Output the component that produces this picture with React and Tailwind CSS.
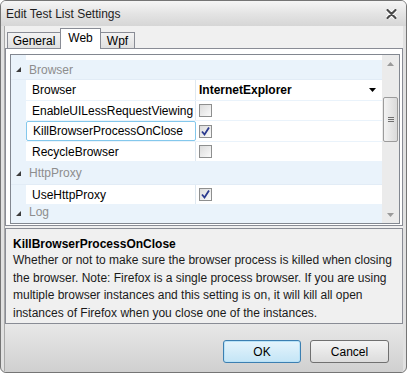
import { useState } from "react";

const font = { fontFamily: '"Liberation Sans", Arial, sans-serif' };

const Check = ({ checked }) => (
  <div className="w-[13px] h-[13px] border border-[#8e8f8f] bg-gradient-to-br from-[#dcdcdc] to-[#fafafa] flex items-center justify-center">
    {checked && (
      <svg width="11" height="11" viewBox="0 0 11 11">
        <path d="M2 5.5 L4.5 8.5 L9 1.5" fill="none" stroke="#2b3a8f" strokeWidth="1.8" />
      </svg>
    )}
  </div>
);

const Category = ({ label, h }) => (
  <div className={`flex items-center shrink-0 ${h} bg-[#eaf3fb] border-b border-[#e2ecf6]`}>
    <div className="w-[15px] flex justify-center">
      <svg width="7" height="7" viewBox="0 0 7 7">
        <path d="M6 1 L6 6 L1 6 Z" fill="#3c3c3c" />
      </svg>
    </div>
    <span className="text-[#8d8d8d] pl-[3px]">{label}</span>
  </div>
);

const Row = ({ name, selected, h, children }) => (
  <div className={`flex shrink-0 ${h} border-b border-[#eaf3fb]`}>
    <div className="w-[15px] bg-[#eaf3fb]" />
    <div
      className={`w-[170px] flex items-center pl-[6px] ${
        selected ? "border border-[#84c8ec] rounded-[2px] bg-white pl-[5px]" : "border-r border-[#dfe8f0]"
      }`}
    >
      {name}
    </div>
    <div className="flex-1 flex items-center pl-[3px] pr-[6px] bg-white">{children}</div>
  </div>
);

const tabs = [
  { label: "General", w: "w-[54px]" },
  { label: "Web", w: "w-[41px]" },
  { label: "Wpf", w: "w-[35px]" },
];

export default function App() {
  const [tab, setTab] = useState("Web");
  return (
    <div className="w-[409px] h-[375px] bg-white text-[12px] text-black" style={font}>
      <div className="w-[407px] h-[373px] border border-[#757575] rounded-[6px] overflow-hidden flex flex-col bg-[#e1e1e1]">
        <div className="h-[25px] shrink-0 flex items-center justify-between pl-[5px] pr-[9px] bg-gradient-to-b from-[#f6f6f6] via-[#e4e4e4] to-[#d6d6d6]">
          <span className="text-[12px] text-[#1e1e1e]">Edit Test List Settings</span>
          <svg width="11" height="10" viewBox="0 0 11 10">
            <path d="M1.5 1 L9.5 9 M9.5 1 L1.5 9" stroke="#ffffff" strokeWidth="4" strokeLinecap="round" />
            <path d="M1.5 1 L9.5 9 M9.5 1 L1.5 9" stroke="#4a4a4a" strokeWidth="2.2" strokeLinecap="round" />
          </svg>
        </div>
        <div className="flex-1 ml-[3px] mr-[3px] pt-[1px] flex flex-col bg-[#f0f0f0] border-l border-[#a9a9a9]">
          <div className="flex pl-[2px] h-[21px] items-end shrink-0">
            {tabs.map((t) => (
              <button
                key={t.label}
                onClick={() => setTab(t.label)}
                className={`${t.w} border border-[#898c95] border-b-0 -mr-[1px] leading-none ${
                  tab === t.label
                    ? "h-[21px] bg-white z-10 relative top-[1px] pb-[3px]"
                    : "h-[16px] bg-gradient-to-b from-[#f3f3f3] to-[#e0e0e0] pt-[1px]"
                }`}
              >
                {t.label}
              </button>
            ))}
          </div>
          <div className="border border-[#898c95] bg-white pt-[5px] pl-[4px] pr-[2px] pb-[1px] h-[178px] shrink-0">
            <div className="border border-[#828790] h-full flex overflow-hidden">
              <div className="flex-1 flex flex-col">
                <div className="h-[5px] flex shrink-0">
                  <div className="w-[15px] bg-[#eaf3fb]" />
                </div>
                <Category label="Browser" h="h-[20px]" />
                <Row name="Browser" h="h-[21px]">
                  <span className="font-bold flex-1">InternetExplorer</span>
                  <svg width="7" height="4" viewBox="0 0 7 4">
                    <path d="M0 0 L7 0 L3.5 4 Z" fill="#000" />
                  </svg>
                </Row>
                <Row name="EnableUILessRequestViewing" h="h-[20px]">
                  <Check />
                </Row>
                <Row name="KillBrowserProcessOnClose" selected h="h-[21px]">
                  <Check checked />
                </Row>
                <Row name="RecycleBrowser" h="h-[20px]">
                  <Check />
                </Row>
                <Category label="HttpProxy" h="h-[23px]" />
                <Row name="UseHttpProxy" h="h-[20px]">
                  <Check checked />
                </Row>
                <div className="flex-1 flex bg-[#eaf3fb]">
                  <div className="w-[15px] flex justify-center pt-[5px]">
                    <svg width="7" height="7" viewBox="0 0 7 7">
                      <path d="M6 1 L6 6 L1 6 Z" fill="#3c3c3c" />
                    </svg>
                  </div>
                  <span className="text-[#8d8d8d] pl-[3px] leading-none pt-[1px]">Log</span>
                </div>
              </div>
              <div className="w-[17px] bg-[#ebebeb] flex flex-col items-center shrink-0">
                <div className="h-[17px] flex items-center justify-center">
                  <svg width="7" height="4" viewBox="0 0 7 4">
                    <path d="M0 4 L7 4 L3.5 0 Z" fill="#9a9a9a" />
                  </svg>
                </div>
                <div className="mt-[25px] w-[15px] h-[45px] border border-[#9b9b9b] rounded-[2px] bg-gradient-to-r from-[#f3f3f3] to-[#dadada] flex flex-col items-center justify-center gap-[1px]">
                  <div className="w-[6px] h-px bg-[#6f6f6f]" />
                  <div className="w-[6px] h-px bg-[#6f6f6f]" />
                  <div className="w-[6px] h-px bg-[#6f6f6f]" />
                </div>
                <div className="flex-1" />
                <div className="h-[17px] flex items-center justify-center">
                  <svg width="7" height="4" viewBox="0 0 7 4">
                    <path d="M0 0 L7 0 L3.5 4 Z" fill="#9a9a9a" />
                  </svg>
                </div>
              </div>
            </div>
          </div>
          <div className="mt-[2px] border border-[#898c95] bg-[#f0f0f0] px-[7px] pt-[9px] h-[96px] shrink-0">
            <div className="font-bold leading-none">KillBrowserProcessOnClose</div>
            <p className="leading-[17.5px] mt-[2px] text-[#1a1a1a]">
              Whether or not to make sure the browser process is killed when closing the browser. Note: Firefox is a
              single process browser. If you are using multiple browser instances and this setting is on, it will kill
              all open instances of Firefox when you close one of the instances.
            </p>
          </div>
          <div className="flex-1 flex justify-end items-start gap-[9px] pt-[16px] pr-[14px] bg-gradient-to-b from-[#e8e8e8] to-[#d0d0d0]">
            <button className="w-[78px] h-[23px] rounded-[3px] border border-[#3c7fb1] bg-gradient-to-b from-[#e5f4fc] to-[#c4e5f6] shadow-[inset_0_0_0_1px_#b9e2f7]">
              OK
            </button>
            <button className="w-[79px] h-[23px] rounded-[3px] border border-[#707070] bg-gradient-to-b from-[#f4f4f4] to-[#dcdcdc]">
              Cancel
            </button>
          </div>
        </div>
      </div>
    </div>
  );
}
